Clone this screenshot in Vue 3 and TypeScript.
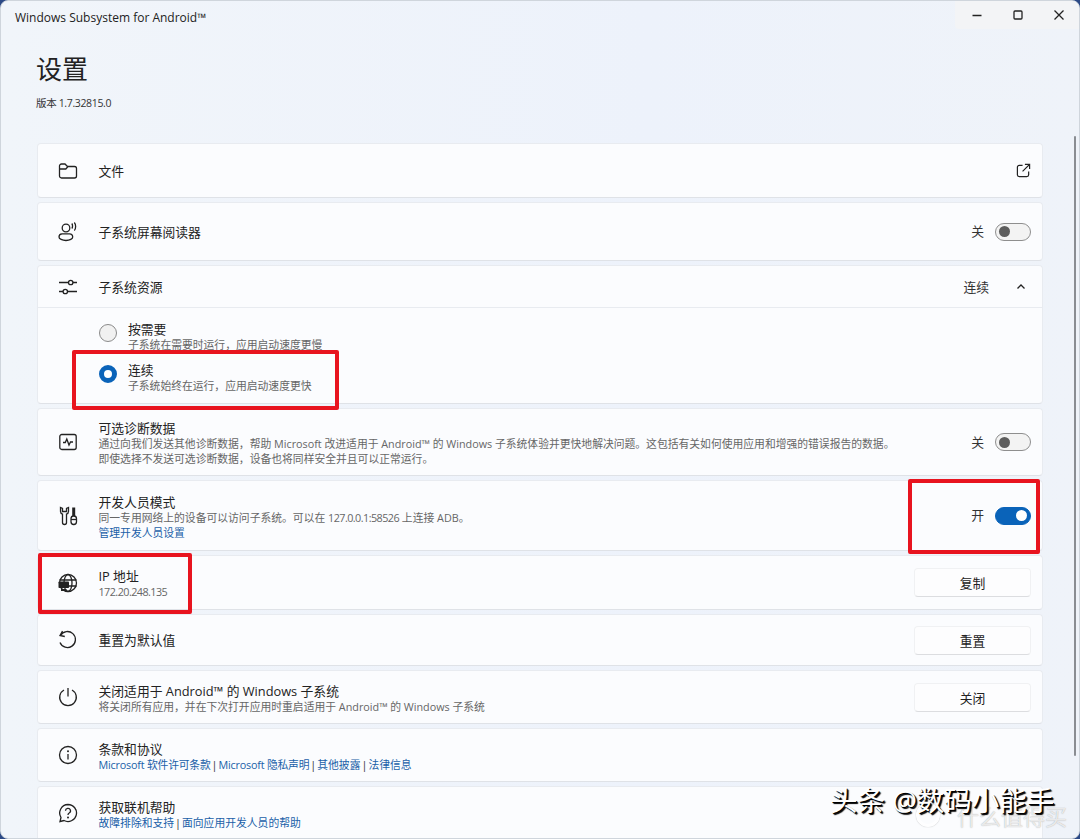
<script setup lang="ts">
const terms: string[] = ['Microsoft 软件许可条款', 'Microsoft 隐私声明', '其他披露', '法律信息']
const help: string[] = ['故障排除和支持', '面向应用开发人员的帮助']
</script>

<template>
  <div class="win">
    <header class="titlebar">
      <span class="apptitle">Windows Subsystem for Android™</span>
      <div class="caption">
        <svg width="12" height="12" viewBox="0 0 12 12"><path d="M1.500 6.500h9" class="st" /></svg>
        <svg width="12" height="12" viewBox="0 0 12 12"><rect x="2" y="2" width="8" height="8" rx="1" class="st" /></svg>
        <svg width="12" height="12" viewBox="0 0 12 12"><path d="M1.500 1.500l9 9M10.500 1.500l-9 9" class="st" /></svg>
      </div>
    </header>

    <main class="page">
      <h1 class="h1">设置</h1>
      <p class="version">版本 1.7.32815.0</p>

      <section class="list">
        <div class="card r54">
          <svg class="ic" viewBox="0 0 20 20"><path d="M1.500 5a2 2 0 0 1 2-2h3.500l2.500 2.500h7a2 2 0 0 1 2 2V15a2 2 0 0 1-2 2h-13a2 2 0 0 1-2-2zM1.500 8h6.300l2.200-2.500" class="st" /></svg>
          <div class="txt"><div class="t">文件</div></div>
          <svg class="ext" viewBox="0 0 16 16"><path d="M7 2.500H3.500a2 2 0 0 0-2 2v8a2 2 0 0 0 2 2h8a2 2 0 0 0 2-2V9M9.500 1.500h5v5M14.500 1.500l-7.500 7.500" class="st" /></svg>
        </div>

        <div class="card r58">
          <svg class="ic" viewBox="0 0 20 20"><circle cx="8" cy="6" r="3.800" class="st" /><path d="M4 11.800h7.500a3.200 3.200 0 0 1 3.200 3.200c0 1.800-2.900 3.500-6.700 3.500S1 16.800 1 15a3.200 3.200 0 0 1 3-3.200zM13.800 1.500c1 1.200 1 3.800 0 5M16.300 0.500c1.800 2 1.800 6 0 8" class="st" /></svg>
          <div class="txt"><div class="t">子系统屏幕阅读器</div></div>
          <div class="ctl">
            <span class="state">关</span>
            <span class="toggle"><i /></span>
          </div>
        </div>

        <div class="card col">
          <div class="head">
            <svg class="ic" viewBox="0 0 20 20"><path d="M1 5.500h9.500M15 5.500h4M1 14.500h4M9.500 14.500h9.500" class="st" /><circle cx="12.700" cy="5.500" r="2.200" class="st" /><circle cx="7.300" cy="14.500" r="2.200" class="st" /></svg>
            <div class="txt"><div class="t">子系统资源</div></div>
            <span class="value">连续</span>
            <svg class="chev" viewBox="0 0 10 10"><path d="M1.500 6.500L5 3l3.500 3.500" class="st" /></svg>
          </div>
          <div class="radios">
            <div class="radio">
              <span class="dot" />
              <div class="txt"><div class="t">按需要</div><div class="s">子系统在需要时运行，应用启动速度更慢</div></div>
            </div>
            <div class="radio">
              <span class="dot on" />
              <div class="txt"><div class="t">连续</div><div class="s">子系统始终在运行，应用启动速度更快</div></div>
            </div>
          </div>
        </div>

        <div class="card r67">
          <svg class="ic" viewBox="0 0 20 20"><rect x="1.800" y="2.500" width="16.400" height="15" rx="2" class="st" /><path d="M5 10.500h2.300l1.500-3.500 2.200 6 1.500-3h2.500" class="st" /></svg>
          <div class="txt">
            <div class="t">可选诊断数据</div>
            <div class="s">通过向我们发送其他诊断数据，帮助 Microsoft 改进适用于 Android™ 的 Windows 子系统体验并更快地解决问题。这包括有关如何使用应用和增强的错误报告的数据。</div>
            <div class="s">即使选择不发送可选诊断数据，设备也将同样安全并且可以正常运行。</div>
          </div>
          <div class="ctl">
            <span class="state">关</span>
            <span class="toggle"><i /></span>
          </div>
        </div>

        <div class="card r70">
          <svg class="ic" viewBox="0 0 20 20"><path d="M2.500 1.500v4a2.800 2.800 0 0 0 2 2.600V16.500a2 2 0 0 0 4 0V8.100a2.800 2.800 0 0 0 2-2.600v-4l-2 1v3h-4v-3z" class="st" /><rect x="13" y="10" width="5.500" height="8.500" rx="2.700" class="st" /><path d="M13 13.500h5.500" class="st" /><path d="M15.700 1.500v8.500" class="thick" /></svg>
          <div class="txt">
            <div class="t">开发人员模式</div>
            <div class="s">同一专用网络上的设备可以访问子系统。可以在 <span class="num">127.0.0.1:58526</span> 上连接 ADB。</div>
            <div class="s link">管理开发人员设置</div>
          </div>
          <div class="ctl">
            <span class="state">开</span>
            <span class="toggle on"><i /></span>
          </div>
        </div>

        <div class="card r54">
          <svg class="ic" viewBox="0 0 20 20"><circle cx="10" cy="10" r="8.500" class="st" /><ellipse cx="10" cy="10" rx="4" ry="8.500" class="st" /><path d="M1.500 7h17M1.500 13h17" class="st" /><rect x="0.500" y="8.500" width="10.500" height="6.500" rx="0.800" class="fill" /><rect x="3" y="16" width="5.500" height="2" class="fill" /></svg>
          <div class="txt"><div class="t">IP 地址</div><div class="s num">172.20.248.135</div></div>
          <button class="btn">复制</button>
        </div>

        <div class="card r51">
          <svg class="ic" viewBox="0 0 20 20"><path d="M4.500 1L2 5.500l4.800 1M2.500 5.500a8 8 0 1 1-.5 7" class="st" /></svg>
          <div class="txt"><div class="t">重置为默认值</div></div>
          <button class="btn">重置</button>
        </div>

        <div class="card r53">
          <svg class="ic" viewBox="0 0 20 20"><path d="M6 3a8.300 8.300 0 1 0 8 0M10 1v8.500" class="st" /></svg>
          <div class="txt">
            <div class="t">关闭适用于 Android™ 的 Windows 子系统</div>
            <div class="s">将关闭所有应用，并在下次打开应用时重启适用于 Android™ 的 Windows 子系统</div>
          </div>
          <button class="btn">关闭</button>
        </div>

        <div class="card r53">
          <svg class="ic" viewBox="0 0 20 20"><circle cx="10" cy="10" r="8.500" class="st" /><path d="M10 9v5.500" class="st" /><circle cx="10" cy="6.300" r="1" class="fill" /></svg>
          <div class="txt">
            <div class="t">条款和协议</div>
            <div class="s">
              <template v-for="(item, i) in terms" :key="item">
                <span v-if="i" class="sep">|</span><span class="link" :class="{ tight: i < 2 }">{{ item }}</span>
              </template>
            </div>
          </div>
        </div>

        <div class="card r53 last">
          <svg class="ic" viewBox="0 0 20 20"><path d="M10 1.500a8.500 8.500 0 1 1-4 16L2 18.500l1-4A8.500 8.500 0 0 1 10 1.500z" class="st" /><path d="M7.500 7.800a2.500 2.500 0 1 1 3.700 2.200c-.9.500-1.200 1-1.200 2" class="st" /><circle cx="10" cy="14.500" r="1" class="fill" /></svg>
          <div class="txt">
            <div class="t">获取联机帮助</div>
            <div class="s">
              <template v-for="(item, i) in help" :key="item">
                <span v-if="i" class="sep">|</span><span class="link">{{ item }}</span>
              </template>
            </div>
          </div>
        </div>
      </section>
    </main>

    <span class="scrollbar" />
    <span class="mark m1" />
    <span class="mark m2" />
    <span class="mark m3" />
    <span class="wm-logo" />
    <span class="wm-back">什么值得买</span>
    <span class="wm">头条 @数码小能手</span>
  </div>
</template>

<style>
html, body { margin: 0; background: #2c4a86; }
</style>

<style scoped>
.win {
  position: relative;
  width: 1080px;
  height: 839px;
  overflow: hidden;
  box-sizing: border-box;
  background: linear-gradient(90deg, #f1f5fa 0%, #edf2fb 60%, #eff3f9 100%);
  border-radius: 8px;
  border: 1px solid #cfd5dc;
  color: #1c1c1c;
  font-family: "Open Sans", "Noto Sans CJK SC", sans-serif;
}
.titlebar {
  height: 29px;
  display: flex;
  justify-content: space-between;
  align-items: flex-start;
}
.apptitle { font-size: 12px; line-height: 14px; margin: 10px 0 0 14px; color: #222; }
.caption {
  width: 124px;
  height: 28px;
  display: flex;
  align-items: center;
  gap: 29px;
  padding-left: 16px;
  box-sizing: border-box;
  background: #f3f4f6;
  border-bottom-left-radius: 4px;
}
.st { fill: none; stroke: #222; stroke-width: 1.300; }
.thick { fill: none; stroke: #222; stroke-width: 3; }
.fill { fill: #222; stroke: none; }
.page { padding: 0 36px; }
.h1 { margin: 20px 0 0 -1px; font-size: 26px; line-height: 38px; font-weight: 400; color: #222; }
.version { margin: 8px 0 0 -1px; font-size: 10.500px; line-height: 14px; color: #333; letter-spacing: -0.350px; }
.list { margin-top: 33px; display: flex; flex-direction: column; gap: 4px; }
.card {
  box-sizing: border-box;
  display: flex;
  align-items: center;
  background: #fbfcfe;
  border: 1px solid #e8ebf0;
  border-bottom-color: #dfe2e7;
  border-radius: 4px;
  padding: 0 11px 0 20px;
}
.r54 { height: 55px; }
.r58 { height: 59px; }
.r67 { height: 68px; }
.r70 { height: 71px; }
.r51 { height: 52px; }
.r53 { height: 54px; }
.last { height: 60px; padding-bottom: 6px; }
.col { display: block; padding: 0; height: 139px; }
.head {
  height: 42px;
  display: flex;
  align-items: center;
  padding: 0 16px 0 20px;
  border-bottom: 1px solid #e8ebf0;
  box-sizing: border-box;
}
.ic { width: 20px; height: 20px; flex: none; margin-right: 20.500px; }
.txt { flex: 1; min-width: 0; }
.txt:has(.s) { padding-top: 2px; }
.t { font-size: 12.800px; line-height: 16px; color: #222; }
.s { font-size: 10.800px; line-height: 15px; color: #666; white-space: nowrap; }
.num { letter-spacing: -0.550px; }
.link, .s.link { color: #1a5fa8; }
.tight { letter-spacing: -0.200px; }
.sep { color: #333; margin: 0 1px; }
.ext { width: 15px; height: 15px; flex: none; }
.ctl { display: flex; align-items: center; gap: 11px; flex: none; }
.state { font-size: 12.800px; line-height: 15px; color: #333; }
.value { font-size: 12.800px; color: #333; margin-right: 27px; }
.chev { width: 10px; height: 10px; flex: none; }
.toggle {
  width: 36px;
  height: 18px;
  box-sizing: border-box;
  border: 1px solid #8e8e8e;
  border-radius: 9px;
  background: #f3f3f3;
  display: flex;
  align-items: center;
  padding: 0 3px;
}
.toggle i { width: 11px; height: 11px; border-radius: 50%; background: #5d5d5d; }
.toggle.on { background: #0a63b9; border-color: #0a63b9; justify-content: flex-end; }
.toggle.on i { background: #fff; }
.radios { padding: 11px 0 0 61px; display: flex; flex-direction: column; gap: 8px; }
.radio { display: flex; align-items: flex-start; }
.dot {
  width: 18px;
  height: 18px;
  box-sizing: border-box;
  border: 1px solid #8a8a8a;
  border-radius: 50%;
  background: #f1f1f1;
  margin: 5px 11px 0 0;
  flex: none;
}
.dot.on { border: 5px solid #0a63b9; background: #fff; }
.btn {
  width: 117px;
  height: 29px;
  flex: none;
  background: #fdfdfe;
  border: 1px solid #f0f1f3;
  border-bottom-color: #dcdde0;
  border-radius: 4px;
  padding: 0;
  font: inherit;
  font-size: 12.800px;
  color: #222;
}
.scrollbar { position: absolute; left: 1073px; top: 135px; width: 2px; height: 620px; background: #8a8d92; border-radius: 1px; }
.mark { position: absolute; border: 4px solid #e8141f; border-radius: 2px; box-sizing: border-box; }
.m1 { left: 71px; top: 349px; width: 267px; height: 60px; }
.m2 { left: 907px; top: 478px; width: 132px; height: 75px; }
.m3 { left: 37px; top: 552px; width: 154px; height: 61px; }
.wm {
  position: absolute;
  left: 829px;
  top: 784px;
  font-size: 27.500px;
  line-height: 32px;
  color: #fff;
  white-space: nowrap;
  text-shadow: 1px 1px 0 #000, 2px 2px 1px #000;
}
.wm-back {
  position: absolute;
  left: 956px;
  top: 800px;
  font-size: 22px;
  line-height: 30px;
  color: rgba(255, 255, 255, 0.75);
  text-shadow: 0 0 1px rgba(90, 90, 90, 0.55);
  white-space: nowrap;
}
.wm-logo {
  position: absolute;
  left: 915px;
  top: 802px;
  width: 24px;
  height: 24px;
  box-sizing: border-box;
  border-radius: 50%;
  border: 3px solid rgba(255, 255, 255, 0.75);
  box-shadow: 0 0 1px rgba(90, 90, 90, 0.55);
}
</style>
